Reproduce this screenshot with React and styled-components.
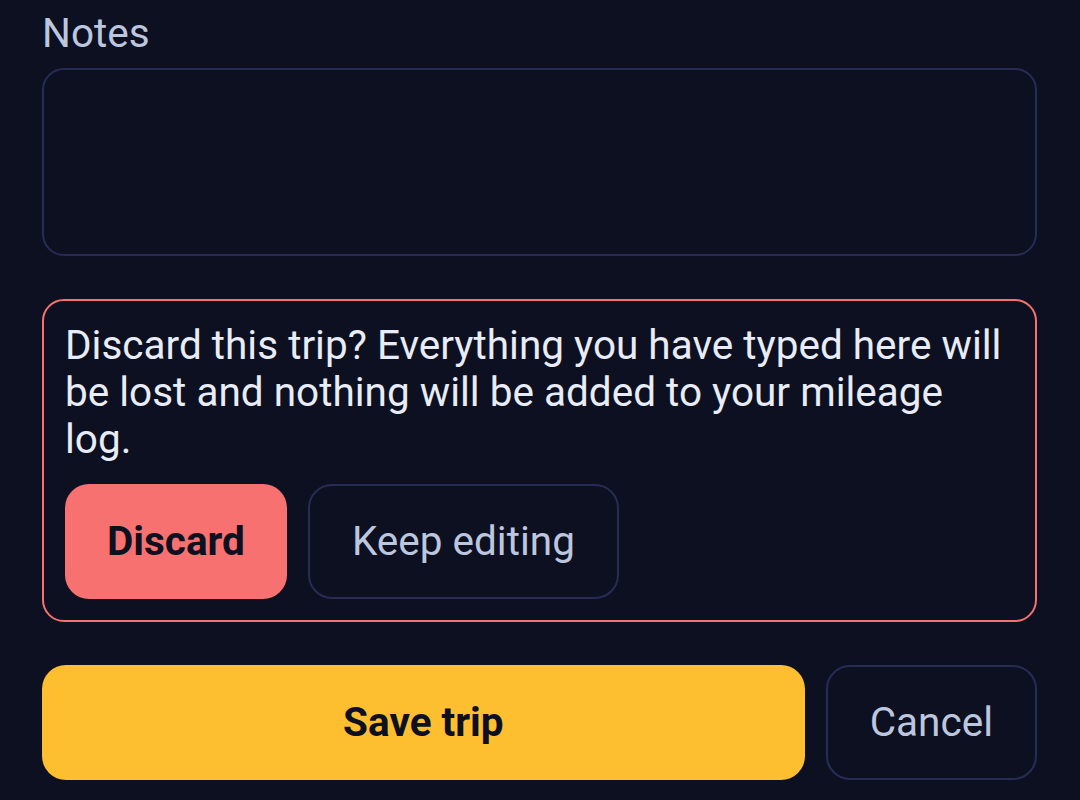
import React from "react";
import styled, { createGlobalStyle } from "styled-components";

const Global = createGlobalStyle`
  html, body { margin: 0; padding: 0; background: #0d1020; }
  body { font-family: Roboto, "Noto Sans", "Liberation Sans", sans-serif; }
  * { box-sizing: border-box; }
`;

const Page = styled.div`
  min-height: 800px;
  background: #0d1020;
  padding: 10px 43px 20px 42px;
  display: flex;
  flex-direction: column;
`;

const Field = styled.div`
  display: flex;
  flex-direction: column;
  gap: 11px;
`;

const Label = styled.label`
  font-size: 40.5px;
  line-height: 47px;
  color: #bcc7df;
`;

const TextArea = styled.textarea`
  height: 188px;
  width: 100%;
  resize: none;
  background: transparent;
  border: 2px solid #262c55;
  border-radius: 22px;
  outline: none;
  color: #e8ecf6;
  font: inherit;
  font-size: 40.5px;
  padding: 20px;
`;

const Confirm = styled.div`
  margin-top: 43px;
  border: 2px solid #f87171;
  border-radius: 22px;
  padding: 21px;
  display: flex;
  flex-direction: column;
  gap: 21px;
`;

const Message = styled.p`
  margin: 0;
  font-size: 40.5px;
  line-height: 47px;
  color: #e8ecf6;
`;

const Row = styled.div`
  display: flex;
  gap: 21px;
`;

const Button = styled.button`
  font-family: inherit;
  font-size: 40.5px;
  line-height: 47px;
  border-radius: 24px;
  height: 115px;
  padding: 0 42px;
  cursor: pointer;
  display: flex;
  align-items: center;
  justify-content: center;
  white-space: nowrap;
  ${(p) =>
    p.$variant === "danger"
      ? `background:#f87171;border:none;color:#0d1020;font-weight:700;`
      : p.$variant === "primary"
      ? `background:#fdbf2f;border:none;color:#0d1020;font-weight:700;flex:1;`
      : `background:transparent;border:2px solid #262c55;color:#bcc7df;font-weight:400;`}
`;

const Actions = styled.div`
  margin-top: 43px;
  display: flex;
  gap: 21px;
`;

export default function App() {
  return (
    <>
      <Global />
      <Page>
        <Field>
          <Label>Notes</Label>
          <TextArea />
        </Field>
        <Confirm>
          <Message>
            Discard this trip? Everything you have typed here will be lost and
            nothing will be added to your mileage log.
          </Message>
          <Row>
            <Button $variant="danger">Discard</Button>
            <Button>Keep editing</Button>
          </Row>
        </Confirm>
        <Actions>
          <Button $variant="primary">Save trip</Button>
          <Button>Cancel</Button>
        </Actions>
      </Page>
    </>
  );
}
